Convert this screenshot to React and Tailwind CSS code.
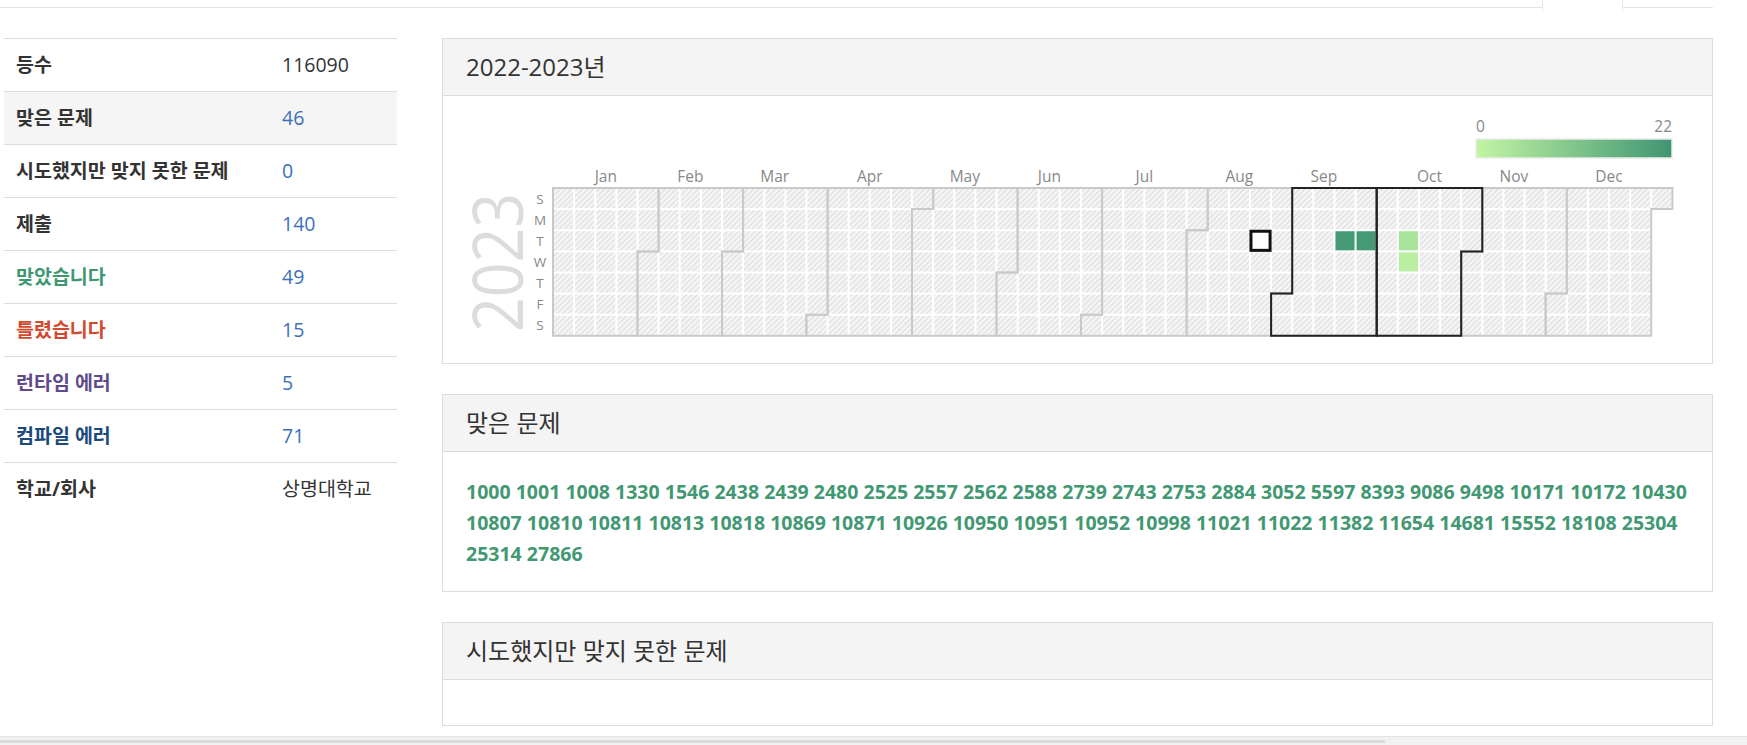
import React from 'react';

const stats = [
  { label: '등수', value: '116090', labelColor: 'text-[#333]', valueColor: 'text-[#333]' },
  { label: '맞은 문제', value: '46', labelColor: 'text-[#333]', valueColor: 'text-[#3c70bb]', shaded: true },
  { label: '시도했지만 맞지 못한 문제', value: '0', labelColor: 'text-[#333]', valueColor: 'text-[#3c70bb]' },
  { label: '제출', value: '140', labelColor: 'text-[#333]', valueColor: 'text-[#3c70bb]' },
  { label: '맞았습니다', value: '49', labelColor: 'text-[#3f9772]', valueColor: 'text-[#3c70bb]' },
  { label: '틀렸습니다', value: '15', labelColor: 'text-[#d24a2e]', valueColor: 'text-[#3c70bb]' },
  { label: '런타임 에러', value: '5', labelColor: 'text-[#5f4b8b]', valueColor: 'text-[#3c70bb]' },
  { label: '컴파일 에러', value: '71', labelColor: 'text-[#1a4a7c]', valueColor: 'text-[#3c70bb]' },
  { label: '학교/회사', value: '상명대학교', labelColor: 'text-[#333]', valueColor: 'text-[#333]' },
];

const solvedLines = [
  '1000 1001 1008 1330 1546 2438 2439 2480 2525 2557 2562 2588 2739 2743 2753 2884 3052 5597 8393 9086 9498 10171 10172 10430',
  '10807 10810 10811 10813 10818 10869 10871 10926 10950 10951 10952 10998 11021 11022 11382 11654 14681 15552 18108 25304',
  '25314 27866',
];

const months = [
  ['Jan', 0], ['Feb', 31], ['Mar', 59], ['Apr', 90], ['May', 120], ['Jun', 151],
  ['Jul', 181], ['Aug', 212], ['Sep', 243], ['Oct', 273], ['Nov', 304], ['Dec', 334],
];
const YEAR_END = 365;

const P = 21.12; // cell pitch
const GX = 110;
const GY = 92;

const pos = (d) => [Math.floor(d / 7), d % 7];
const X = (c) => GX + c * P;
const Y = (r) => GY + r * P;

function monthPath(start, next) {
  const [c1, r1] = pos(start);
  const [c2, r2] = pos(next);
  const pts = [];
  pts.push(r1 === 0 ? [c1, 0] : [c1 + 1, 0]);
  if (r2 === 0) {
    pts.push([c2, 0], [c2, 7]);
  } else {
    pts.push([c2 + 1, 0], [c2 + 1, r2], [c2, r2], [c2, 7]);
  }
  pts.push([c1, 7]);
  if (r1 !== 0) pts.push([c1, r1], [c1 + 1, r1]);
  return 'M' + pts.map(([c, r]) => `${X(c).toFixed(1)} ${Y(r).toFixed(1)}`).join(' L') + ' Z';
}

const filled = {
  '37-2': '#439a74',
  '38-2': '#439a74',
  '40-2': '#a8e39a',
  '40-3': '#b9eea3',
};

function Heatmap() {
  const cells = [];
  for (let d = 0; d < YEAR_END; d++) {
    const [c, r] = pos(d);
    const fill = filled[`${c}-${r}`];
    cells.push(
      <rect
        key={d}
        x={X(c) + 1}
        y={Y(r) + 1}
        width={P - 2}
        height={P - 2}
        fill={fill || 'url(#hatch)'}
      />
    );
  }
  const days = ['S', 'M', 'T', 'W', 'T', 'F', 'S'];
  const font = "'Open Sans', 'Liberation Sans', sans-serif";

  return (
    <svg width="1269" height="267" className="block">
      <defs>
        <pattern id="hatch" width="3.9" height="3.9" patternUnits="userSpaceOnUse" patternTransform="rotate(45)">
          <rect width="3.9" height="3.9" fill="#f5f5f5" />
          <line x1="0.6" y1="0" x2="0.6" y2="3.9" stroke="#dcdcdc" strokeWidth="1.1" />
        </pattern>
        <linearGradient id="legend" x1="0" y1="0" x2="1" y2="0">
          <stop offset="0%" stopColor="#c2f5a4" />
          <stop offset="100%" stopColor="#3f9572" />
        </linearGradient>
      </defs>

      {/* legend */}
      <text x="1033" y="36" fontFamily={font} fontSize="15.5" fill="#888">0</text>
      <text x="1229" y="36" fontFamily={font} fontSize="15.5" fill="#888" textAnchor="end">22</text>
      <rect x="1033" y="43" width="196" height="19" fill="url(#legend)" stroke="#ececec" strokeWidth="1.5" />

      {/* year */}
      <text
        transform="translate(55,166.5) rotate(-90)"
        y="25"
        textAnchor="middle"
        fontFamily={font}
        fontSize="70"
        fill="#dcdcdc"
        textLength="139"
        lengthAdjust="spacingAndGlyphs"
      >
        2023
      </text>

      {/* day labels */}
      {days.map((d, i) => (
        <text key={i} x="97" y={Y(i) + P / 2 + 5} textAnchor="middle" fontFamily={font} fontSize="13.5" fill="#888">
          {d}
        </text>
      ))}

      {/* month labels */}
      {months.map(([name, start], i) => {
        const next = i < 11 ? months[i + 1][1] : YEAR_END;
        const [c1] = pos(start);
        const cEnd = Math.floor((next - 1) / 7);
        const cx = GX + ((c1 + cEnd + 1) / 2) * P;
        return (
          <text key={name} x={cx} y="86" textAnchor="middle" fontFamily={font} fontSize="15.5" fill="#888">
            {name}
          </text>
        );
      })}

      {/* cells */}
      {cells}

      {/* month outlines */}
      {months.map(([name, start], i) => {
        const next = i < 11 ? months[i + 1][1] : YEAR_END;
        return <path key={name} d={monthPath(start, next)} fill="none" stroke="#c9c9c9" strokeWidth="2" />;
      })}
      {[8, 9].map((i) => (
        <path key={i} d={monthPath(months[i][1], months[i + 1][1])} fill="none" stroke="#222" strokeWidth="2" />
      ))}

      {/* today */}
      <rect x={X(33) + 1} y={Y(2) + 1} width={P - 2} height={P - 2} fill="#fff" stroke="#111" strokeWidth="3" />
    </svg>
  );
}

function Panel({ title, children }) {
  return (
    <div className="border border-[#ddd] bg-white">
      <div className="h-[57px] bg-[#f4f4f4] border-b border-[#ddd] px-[23px] flex items-center">
        <h3 className="text-[24px] font-normal text-[#333] whitespace-nowrap">{title}</h3>
      </div>
      {children}
    </div>
  );
}

export default function App() {
  return (
    <div className="relative w-[1747px] h-[745px] overflow-hidden bg-white text-[#333] font-['Open_Sans','Noto_Sans_CJK_KR',sans-serif]">
      {/* tab strip */}
      <div className="flex w-[1713px] h-[11px]">
        <div className="w-[1542px] h-[8px] border-b border-[#e5e5e5]" />
        <div className="w-[81px] h-[11px] border-x border-[#e5e5e5]" />
        <div className="flex-1 h-[8px] border-b border-[#e5e5e5]" />
      </div>

      <div className="flex mt-[27px]">
        {/* stats table */}
        <div className="ml-[4px] w-[393px]">
          {stats.map((s) => (
            <div
              key={s.label}
              className={`flex items-center h-[53px] border-t border-[#ddd] ${s.shaded ? 'bg-[#f5f5f5]' : ''}`}
            >
              <div className={`w-[266px] pl-[12px] text-[19.5px] font-bold whitespace-nowrap ${s.labelColor}`}>
                {s.label}
              </div>
              <div className={`pl-[12px] text-[19.5px] whitespace-nowrap ${s.valueColor}`}>
                {s.value}
              </div>
            </div>
          ))}
        </div>

        {/* panels */}
        <div className="ml-[45px] w-[1271px] flex flex-col gap-[30px]">
          <Panel title="2022-2023년">
            <Heatmap />
          </Panel>

          <Panel title="맞은 문제">
            <div className="h-[139px] pt-[24px] px-[23px] text-[19.5px] font-bold leading-[31px] text-[#429873]">
              {solvedLines.map((line) => (
                <div key={line} className="whitespace-nowrap">
                  {line.split(' ').map((n, i) => (
                    <span key={n}>
                      {i > 0 ? ' ' : ''}
                      <a className="cursor-pointer">{n}</a>
                    </span>
                  ))}
                </div>
              ))}
            </div>
          </Panel>

          <Panel title="시도했지만 맞지 못한 문제">
            <div className="h-[45px]" />
          </Panel>
        </div>
      </div>

      {/* horizontal scrollbar */}
      <div className="absolute left-0 bottom-0 w-full h-[9px] bg-[#f1f1f1] border-t border-[#e2e2e2]">
        <div className="mt-[3px] w-[1385px] h-[3px] bg-[#dadada]" />
      </div>
    </div>
  );
}
